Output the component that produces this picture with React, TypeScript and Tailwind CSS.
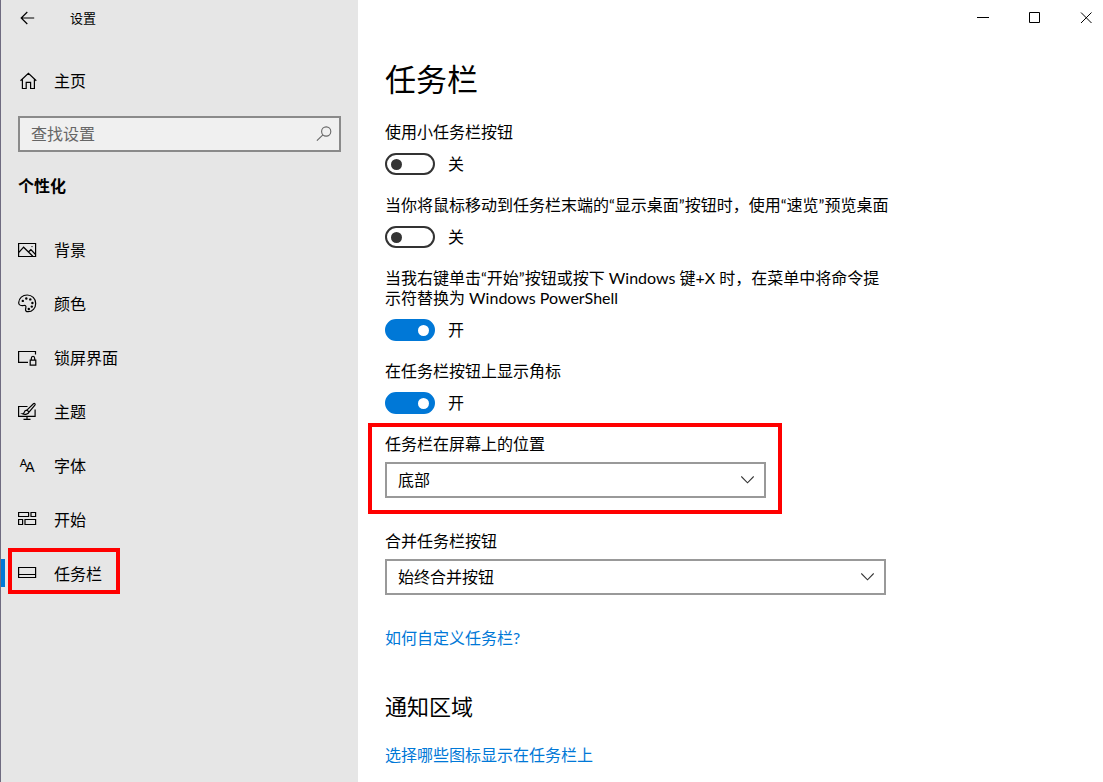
import { useState, type ReactNode } from "react";

function Icon({ children }: { children: ReactNode }) {
  return (
    <svg
      className="size-5 shrink-0 overflow-visible"
      viewBox="0 0 20 20"
      fill="none"
      stroke="currentColor"
      strokeWidth="1.2"
      aria-hidden="true"
    >
      {children}
    </svg>
  );
}

const HomeIcon = () => (
  <Icon>
    <path d="M2.500 9.800 10.400 2.400l7.900 7.400M4.400 8.200v9.300h3.800v-6.200h4.400v6.200h3.800V8.200" />
  </Icon>
);

const navItems: { label: string; icon: ReactNode }[] = [
  {
    label: "背景",
    icon: (
      <Icon>
        <path d="M.6 3.500h17v13H.6zM.9 12.400l4.700-5.200 9.200 9.100M10.400 12l2.500-2.300 4.600 4.800" />
        <circle cx="14" cy="6.600" r=".7" fill="currentColor" stroke="none" />
      </Icon>
    ),
  },
  {
    label: "颜色",
    icon: (
      <Icon>
        <path d="M.7 8.600C.9 4.200 4.600 1 9.200 1c4.800 0 8.500 3.700 8.500 8.400 0 4.700-3.400 8.300-7.600 8.300-2 0-2.900-1-2.500-2.700.4-1.500.8-2.400-.1-3.300-1-1-2 .1-3.400 0C2.100 11.500.6 10.700.7 8.600z" />
        <g fill="currentColor" stroke="none">
          <circle cx="4.800" cy="6.900" r="1.200" />
          <circle cx="8.300" cy="4.500" r="1.200" />
          <circle cx="12.300" cy="5.400" r="1.200" />
          <circle cx="14.400" cy="9" r="1.200" />
          <circle cx="13.800" cy="12.600" r="1.200" />
          <circle cx="10.800" cy="15" r="1.200" />
        </g>
      </Icon>
    ),
  },
  {
    label: "锁屏界面",
    icon: (
      <Icon>
        <path d="M17.500 6.500V3.500H.6v10.900h9.400M12.200 12.200h5.600v5h-5.600zM13.300 12.200v-1.800c0-2.600 3.400-2.600 3.400 0v1.800" />
      </Icon>
    ),
  },
  {
    label: "主题",
    icon: (
      <Icon>
        <path d="M9.500 4.500H.6v9.900h16.500V7.500M9 14.500v2.600M5.500 17.300h7" />
        <path d="M15.400 1.700c1.100-.8 2.300.3 1.500 1.400L11.200 10 8.900 8.100zM8.700 8.200c-2 0-2.300 1.300-2.500 2.200-.2.900-.9 1.300-1.800 1.400 2.500 1.100 6.300.5 6.600-1.900" />
      </Icon>
    ),
  },
  {
    label: "字体",
    icon: (
      <Icon>
        <g fill="currentColor" stroke="none" fontFamily="'Liberation Sans', sans-serif">
          <text x="1.800" y="10.500" fontSize="11">
            A
          </text>
          <text x="7.300" y="15.500" fontSize="14">
            A
          </text>
        </g>
      </Icon>
    ),
  },
  {
    label: "开始",
    icon: (
      <Icon>
        <path d="M.6 2.500h10v4H.6zM13 2.500h4.600v4H13zM.6 9.500h4v5h-4zM7 9.500h10.600v5H7z" />
      </Icon>
    ),
  },
  {
    label: "任务栏",
    icon: (
      <Icon>
        <path d="M.6 3.500h17v10H.6zM.6 10.500h17" />
      </Icon>
    ),
  },
];

function Toggle({ label, initial }: { label: ReactNode; initial: boolean }) {
  const [on, setOn] = useState(initial);
  return (
    <label className="mb-5 block">
      <span className="block">{label}</span>
      <span className="mt-[11px] flex h-[22px] items-center gap-[13px]">
        <input
          type="checkbox"
          role="switch"
          checked={on}
          onChange={(e) => setOn(e.target.checked)}
          className="flex h-[22px] w-[50px] shrink-0 appearance-none items-center rounded-full border-2 border-[#333] px-1 before:size-[11px] before:rounded-full before:bg-[#333] checked:justify-end checked:border-[#0078d7] checked:bg-[#0078d7] checked:before:bg-white"
        />
        <span>{on ? "开" : "关"}</span>
      </span>
    </label>
  );
}

function SelectField({
  id,
  label,
  options,
  wide,
  marked,
}: {
  id: string;
  label: string;
  options: string[];
  wide?: boolean;
  marked?: boolean;
}) {
  return (
    <div className={`relative mb-[33px] max-w-full ${wide ? "w-[501px]" : "w-[381px]"}`}>
      <label htmlFor={id} className="block">
        {label}
      </label>
      <div className="relative mt-2">
        <select
          id={id}
          className="block h-9 w-full appearance-none border-2 border-[#999] bg-white px-[11px] leading-5 text-black"
        >
          {options.map((o) => (
            <option key={o}>{o}</option>
          ))}
        </select>
        <svg
          className="pointer-events-none absolute top-[14px] right-3 h-2 w-[13px]"
          viewBox="0 0 13 8"
          fill="none"
          stroke="#333"
          strokeWidth="1.1"
          aria-hidden="true"
        >
          <path d="M.3.5 6.500 6.800 12.700.5" />
        </svg>
      </div>
      {marked && (
        <div className="pointer-events-none absolute -top-[11px] -right-4 -bottom-4 -left-[17px] border-4 border-[#f00]" />
      )}
    </div>
  );
}

export default function App() {
  return (
    <div className="flex min-h-screen bg-white font-['Lato','Noto_Sans_CJK_SC',sans-serif] text-[16px] leading-5 text-black">
      <aside className="w-[358px] shrink-0 border-l border-[#6f6b80] bg-[#e6e6e6]">
        <header className="flex h-9 items-center gap-[31px] pl-[18px] text-[13px]">
          <button type="button" aria-label="返回">
            <Icon>
              <path d="M8.300 4 2.200 10l6.100 6M2.200 10h13" />
            </Icon>
          </button>
          <span>设置</span>
        </header>
        <a href="#home" className="mt-[18px] flex h-[54px] items-center gap-4 pl-[17px]">
          <HomeIcon />
          <span>主页</span>
        </a>
        <div className="relative mt-2 mr-[17px] ml-[17px]">
          <input
            type="search"
            aria-label="查找设置"
            placeholder="查找设置"
            className="block h-9 w-full border-2 border-[#8a8a8a] bg-[#f0f0f0] px-[11px] pb-0.5 placeholder:text-[#666]"
          />
          <svg
            className="pointer-events-none absolute top-[10px] right-[9px] size-4"
            viewBox="0 0 16 16"
            fill="none"
            stroke="#666"
            strokeWidth="1.1"
            aria-hidden="true"
          >
            <circle cx="10.200" cy="5.500" r="4.600" />
            <path d="M6.900 8.800.9 14.700" />
          </svg>
        </div>
        <h2 className="mt-6 pl-[17px] font-bold">个性化</h2>
        <nav className="mt-[27px]">
          {navItems.map(({ label, icon }, i) => {
            const active = i === navItems.length - 1;
            return (
              <a
                key={label}
                href="#nav"
                aria-current={active ? "page" : undefined}
                className="relative flex h-[54px] items-center gap-4 pl-[17px]"
              >
                {active && <span className="absolute top-3 left-0 h-7 w-1 bg-[#0078d7]" />}
                {icon}
                <span>{label}</span>
                {active && (
                  <span className="pointer-events-none absolute top-px left-[7px] h-[46px] w-28 border-4 border-[#f00]" />
                )}
              </a>
            );
          })}
        </nav>
      </aside>

      <div className="min-w-0 flex-1">
        <div className="flex h-9 items-center justify-end gap-9 pr-[9px]">
          <button type="button" aria-label="最小化">
            <svg className="size-4" viewBox="0 0 16 16" stroke="#000" fill="none">
              <path d="M3 7.500h12" />
            </svg>
          </button>
          <button type="button" aria-label="最大化">
            <svg className="size-4" viewBox="0 0 16 16" stroke="#000" fill="none">
              <path d="M3.500 2.500h10v10h-10z" />
            </svg>
          </button>
          <button type="button" aria-label="关闭">
            <svg className="size-4" viewBox="0 0 16 16" stroke="#000" fill="none">
              <path d="m3 2.500 10.500 10.500M13.500 2.500 3 13" />
            </svg>
          </button>
        </div>
        <main className="pt-6 pr-4 pl-[27px]">
          <h1 className="mb-6 text-[31px] leading-[38px]">任务栏</h1>
          <Toggle label="使用小任务栏按钮" initial={false} />
          <Toggle
            label="当你将鼠标移动到任务栏末端的“显示桌面”按钮时，使用“速览”预览桌面"
            initial={false}
          />
          <Toggle
            label={
              <>
                当我右键单击“开始”按钮或按下 Windows 键+X 时，在菜单中将命令提
                <br />
                示符替换为 Windows PowerShell
              </>
            }
            initial={true}
          />
          <Toggle label="在任务栏按钮上显示角标" initial={true} />
          <SelectField
            id="position"
            label="任务栏在屏幕上的位置"
            options={["底部", "靠左", "顶部", "靠右"]}
            marked
          />
          <SelectField
            id="combine"
            label="合并任务栏按钮"
            options={["始终合并按钮", "任务栏已满时", "从不"]}
            wide
          />
          <a href="#help" className="block w-fit text-[#0078d7]">
            如何自定义任务栏?
          </a>
          <h2 className="mt-11 mb-6 text-[22px] leading-[29px]">通知区域</h2>
          <a href="#icons" className="block w-fit text-[#0078d7]">
            选择哪些图标显示在任务栏上
          </a>
        </main>
      </div>
    </div>
  );
}
